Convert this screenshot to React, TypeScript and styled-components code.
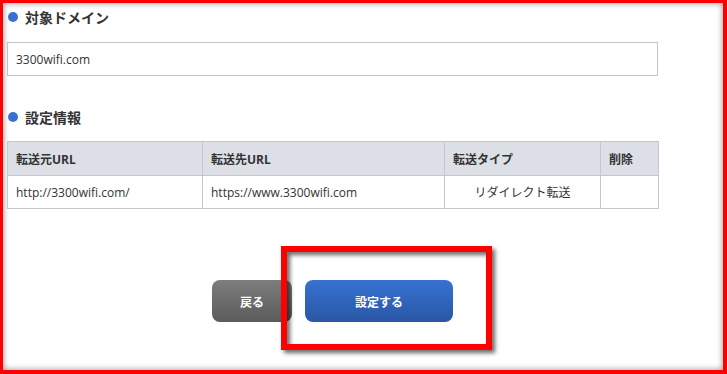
import React from "react";
import styled, { createGlobalStyle } from "styled-components";

const Global = createGlobalStyle`
  html, body { margin: 0; padding: 0; background: #fff; }
  body { font-family: "Open Sans", "Noto Sans CJK JP", sans-serif; color: #333; }
`;

const Frame = styled.div`
  position: relative;
  box-sizing: border-box;
  width: 727px;
  height: 374px;
  border-style: solid;
  border-color: #ff0000;
  border-width: 3px 4px 4px 3px;
  box-shadow: inset 0 0 6px rgba(0, 0, 0, 0.45);
  overflow: hidden;
  background: #fff;
`;

const Content = styled.div`
  width: 651px;
  padding: 0 4px;
`;

const Heading = styled.h2<{ $top: number }>`
  display: flex;
  align-items: center;
  gap: 7px;
  height: 20px;
  margin: ${(p) => p.$top}px 0 0 0;
  font-family: "Noto Sans CJK JP", sans-serif;
  font-size: 14px;
  font-weight: 700;
  color: #333;
  line-height: 20px;
  &::before {
    content: "";
    width: 10px;
    height: 10px;
    margin-left: 1px;
    border-radius: 50%;
    background: #3a70d4;
  }
`;

const Input = styled.div`
  box-sizing: border-box;
  margin-top: 15px;
  height: 34px;
  border: 1px solid #c4c4c4;
  padding: 0 8px;
  display: flex;
  align-items: center;
  font-size: 12px;
  color: #333;
`;

const Table = styled.table`
  margin-top: 14px;
  width: 651px;
  border-collapse: collapse;
  table-layout: fixed;
  font-size: 12px;
  color: #333;
`;

const Th = styled.th<{ $w: number }>`
  width: ${(p) => p.$w}px;
  height: 34px;
  padding: 0 0 0 8px;
  background: #dce0e6;
  border: 1px solid #c4c7cb;
  text-align: left;
  font-weight: 700;
  font-family: "Open Sans", "Noto Sans CJK JP", sans-serif;
  box-sizing: border-box;
`;

const Td = styled.td<{ $center?: boolean }>`
  height: 33px;
  padding: ${(p) => (p.$center ? "0" : "0 0 0 8px")};
  border: 1px solid #c4c7cb;
  text-align: ${(p) => (p.$center ? "center" : "left")};
  box-sizing: border-box;
`;

const Buttons = styled.div`
  margin-top: 71px;
  display: flex;
  justify-content: center;
  gap: 13px;
`;

const Button = styled.button<{ $variant: "back" | "submit" }>`
  width: ${(p) => (p.$variant === "back" ? 80 : 148)}px;
  height: 42px;
  border: none;
  border-radius: 8px;
  color: #fff;
  font-family: "Noto Sans CJK JP", sans-serif;
  font-size: 12px;
  font-weight: 700;
  background: ${(p) =>
    p.$variant === "back"
      ? "linear-gradient(#7d7d7d, #5b5b5b)"
      : "linear-gradient(#3672d1, #2a57a5)"};
  padding: 0;
`;

const Highlight = styled.div`
  position: absolute;
  left: 278px;
  top: 243px;
  width: 211px;
  height: 104px;
  box-sizing: border-box;
  border: 6px solid #ff0000;
  filter: drop-shadow(3px 3px 2px rgba(0, 0, 0, 0.6));
  pointer-events: none;
`;

export default function App() {
  return (
    <>
      <Global />
      <Frame>
        <Content>
          <Heading $top={4}>対象ドメイン</Heading>
          <Input>3300wifi.com</Input>
          <Heading $top={31}>設定情報</Heading>
          <Table>
            <thead>
              <tr>
                <Th $w={195}>転送元URL</Th>
                <Th $w={242}>転送先URL</Th>
                <Th $w={156}>転送タイプ</Th>
                <Th $w={58}>削除</Th>
              </tr>
            </thead>
            <tbody>
              <tr>
                <Td>http://3300wifi.com/</Td>
                <Td>https://www.3300wifi.com</Td>
                <Td $center>リダイレクト転送</Td>
                <Td></Td>
              </tr>
            </tbody>
          </Table>
          <Buttons>
            <Button $variant="back">戻る</Button>
            <Button $variant="submit">設定する</Button>
          </Buttons>
        </Content>
        <Highlight />
      </Frame>
    </>
  );
}
